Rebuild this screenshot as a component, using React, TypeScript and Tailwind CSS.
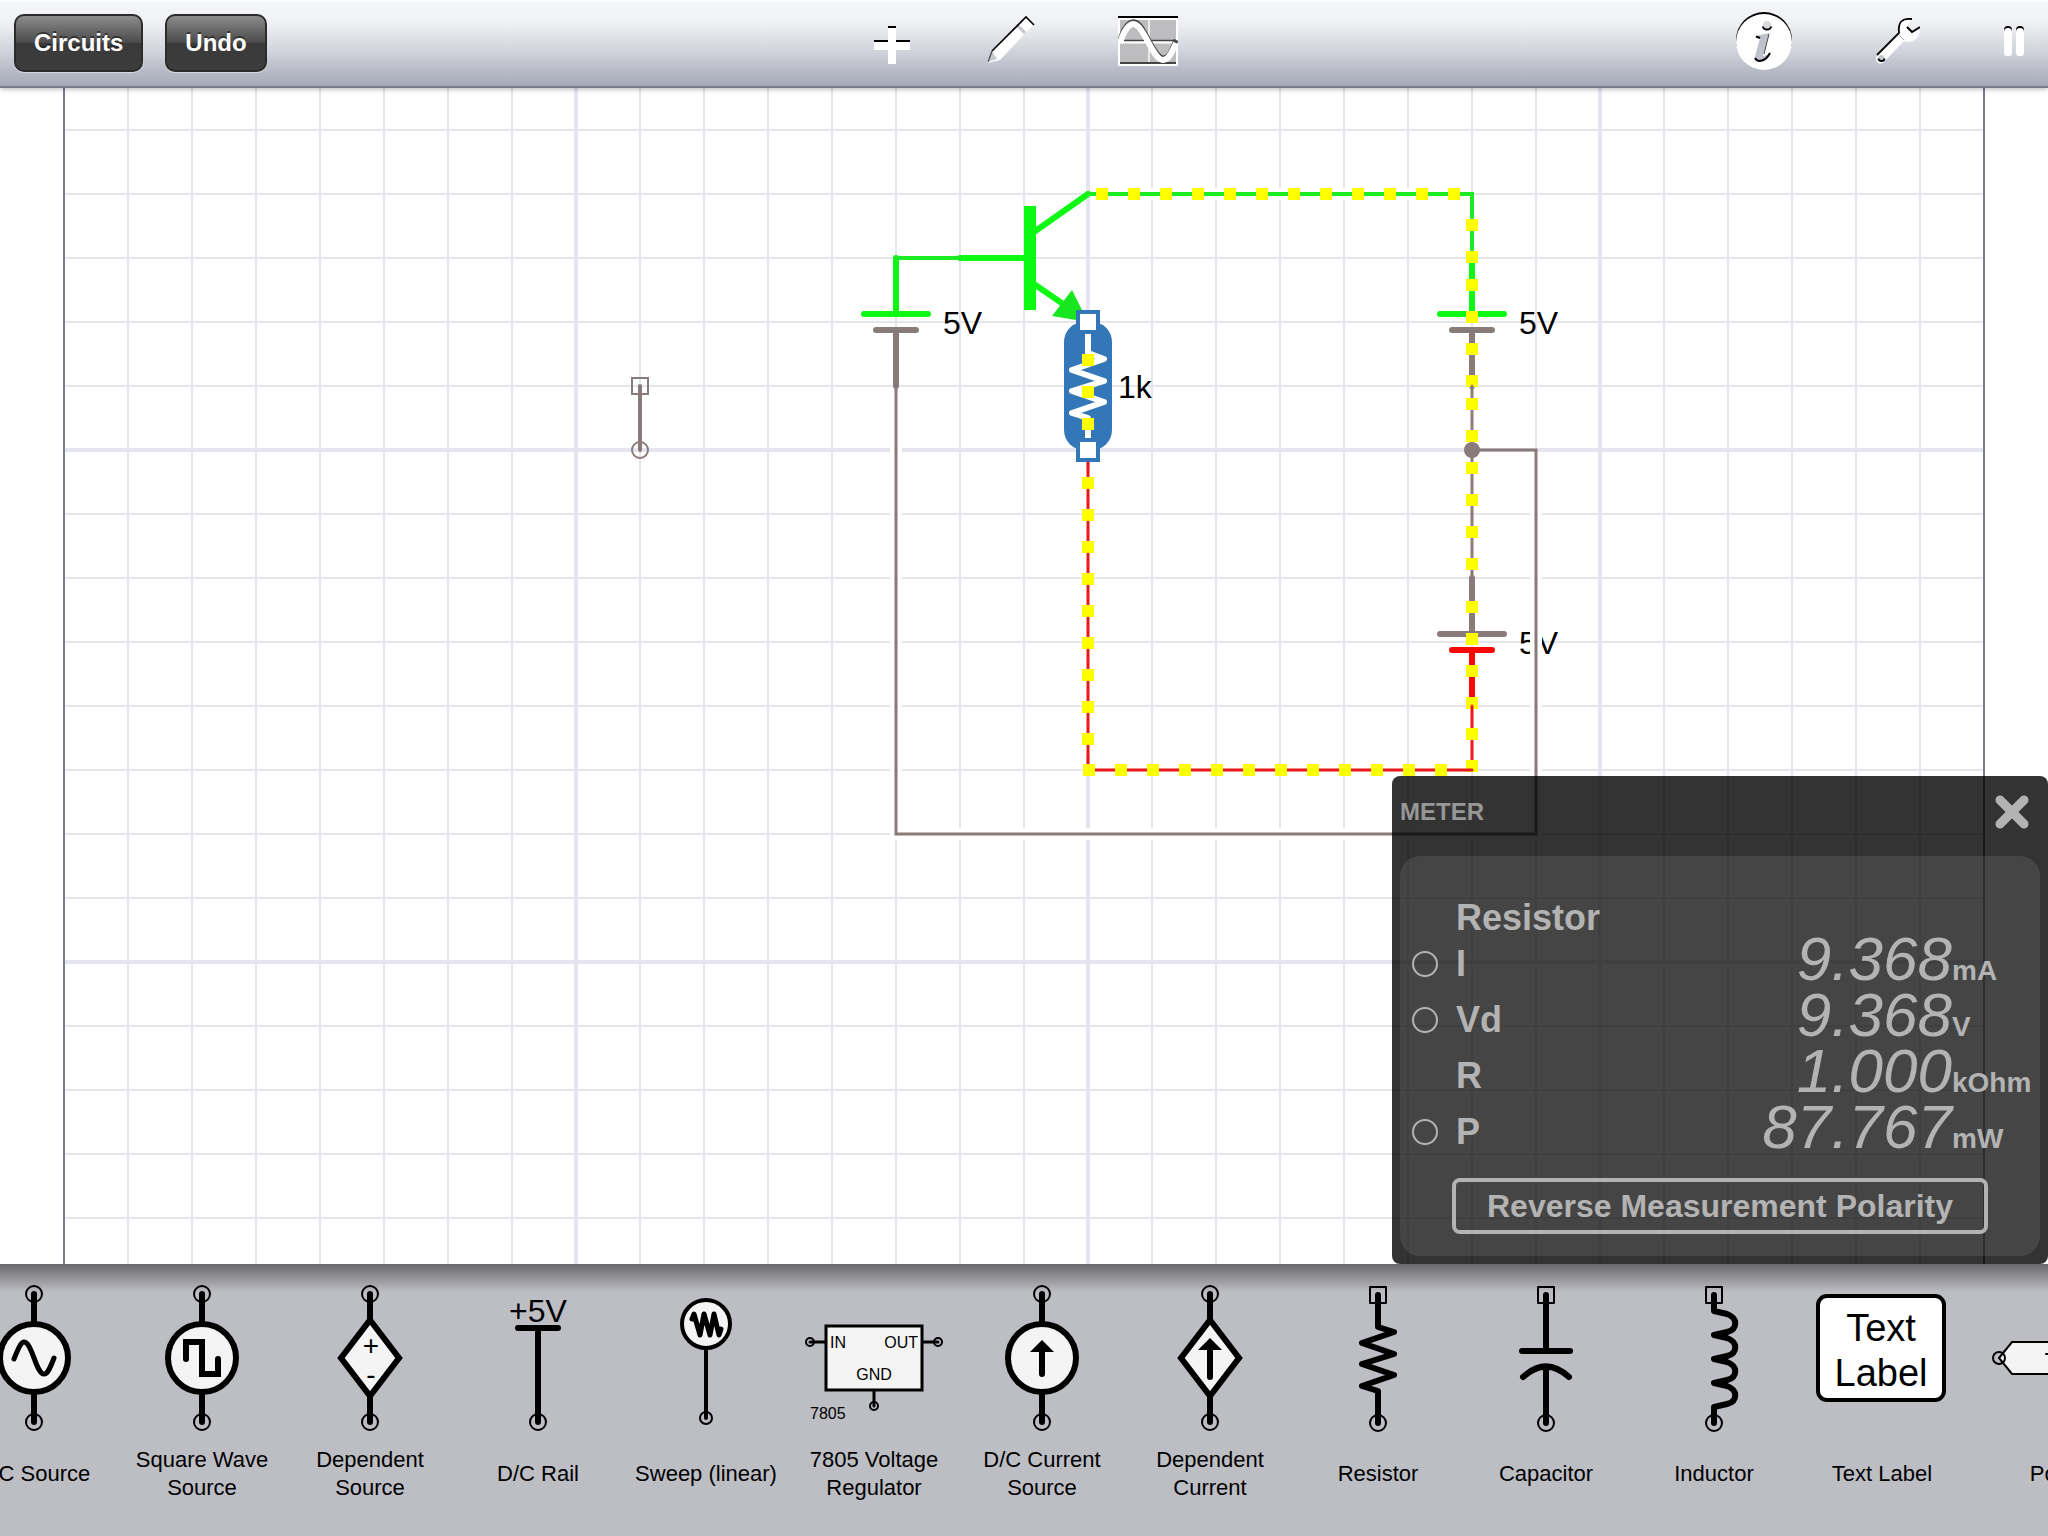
import type { ReactNode } from "react";

const GREY = "#897b79";
const GREEN = "#0bf913";
const RED = "#fb0505";
const YELLOW = "#ffff00";
const BLUE = "#3477b8";

const range = (start: number, step: number, count: number) => Array.from({ length: count }, (_, i) => start + i * step);

const minorX = range(128, 64, 29).filter((x) => (x - 64) % 512 !== 0);
const majorX = [576, 1088, 1600];
const minorY = range(130, 64, 18).filter((y) => y !== 450 && y !== 962);
const majorY = [450, 962];

/* ---------- toolbar ---------- */

function BarButton({ children }: { children: ReactNode }) {
  return (
    <button
      type="button"
      className="h-[58px] rounded-[10px] border-2 border-[#2b2b2b] bg-[linear-gradient(#8c8c8c,#4a4a4a_50%,#3a3a3a_50%,#3c3c3c)] px-[18px] text-2xl font-bold text-white shadow-[0_1px_1px_rgba(255,255,255,0.5)] [text-shadow:0_-2px_0_rgba(0,0,0,0.45)]"
    >
      {children}
    </button>
  );
}

function IconButton({ label, children }: { label: string; children: ReactNode }) {
  return (
    <button type="button" aria-label={label} className="shrink-0">
      {children}
    </button>
  );
}

function PlusIcon() {
  return (
    <svg className="block" width="40" height="62" viewBox="870 12 40 62">
      <path d="M888 26h8v14h14v10h-14v14h-8V50h-14V40h14z" fill="#fff" />
      <path d="M888 26h8v2h-8zM874 40h14v2h-14zM896 40h14v2h-14z" fill="#000" />
    </svg>
  );
}

function PencilIcon() {
  return (
    <svg className="block" width="52" height="62" viewBox="988 12 52 62">
      <path d="M992 50L1026 16L1034 24L1000 60L988 63Z" fill="#fff" />
      <path d="M992 51L988 62L997 59Z" fill="#c9cad0" />
      <path d="M1017 25L1025 33" stroke="#c4c5ca" strokeWidth="3" />
      <path d="M992 51L1026 17L1034 25" stroke="#000" strokeWidth="1.6" fill="none" />
      <path d="M992 51L988 62" stroke="#555" strokeWidth="1.4" />
    </svg>
  );
}

function ScopeIcon() {
  return (
    <svg className="block" width="60" height="62" viewBox="1118 12 60 62">
      <rect x="1118" y="16" width="60" height="50" fill="#fff" />
      <rect x="1120" y="20" width="56" height="44" fill="#bdbdbf" />
      <rect x="1118" y="16" width="60" height="2" fill="#000" />
      <path d="M1149 20v43" stroke="#ececec" strokeWidth="2" />
      <path d="M1120 40.5h56" stroke="#444" strokeWidth="1.4" />
      <path d="M1120 42.5h56" stroke="#fff" strokeWidth="2" />
      <path d="M1120 63h56" stroke="#444" strokeWidth="2" />
      <path d="M1120 40C1125 24 1133 16 1141 27C1149 38 1155 57 1163 58C1169 58 1172 50 1176 40" stroke="#444" strokeWidth="5" fill="none" />
      <path d="M1120 43C1125 27 1133 17 1141 30C1149 41 1155 60 1163 60C1169 60 1172 52 1176 43" stroke="#fff" strokeWidth="6" fill="none" />
    </svg>
  );
}

function InfoIcon() {
  return (
    <svg className="block" width="56" height="62" viewBox="1736 12 56 62">
      <circle cx="1764" cy="40" r="28" fill="#000" />
      <path d="M1736 42a28 28 0 0 1 56 0a28 28 0 0 1-56 0z" fill="#fff" />
      <circle cx="1767" cy="25" r="4" fill="#d8d9de" />
      <path d="M1763 26.5a4 3 0 0 0 8 0" stroke="#000" strokeWidth="2" fill="none" />
      <path d="M1756 36L1769 33L1763 56Q1766 56 1770 53Q1765 61 1759 61Q1753 60 1756 53L1760 38Z" fill="#bfc1cb" />
      <path d="M1756 36.5L1760 38" stroke="#000" strokeWidth="2" />
      <path d="M1769 34L1764 54" stroke="#444" strokeWidth="1" />
      <path d="M1755 58Q1757 62 1762 60.5Q1767 59 1770 53" stroke="#000" strokeWidth="2" fill="none" />
    </svg>
  );
}

function WrenchIcon() {
  return (
    <svg className="block" width="44" height="62" viewBox="1876 12 44 62">
      <path d="M1898 34Q1896 20 1911 18L1907 27L1913 32L1920 27Q1920 42 1906 42L1904 41L1884 62Q1880 65 1877 62Q1875 59 1877 55Z" fill="#fff" />
      <path d="M1912 19Q1897 17 1899 33L1877 55" stroke="#000" strokeWidth="1.8" fill="none" />
      <path d="M1907 27L1912 32L1920 27" stroke="#000" strokeWidth="2" fill="none" />
      <path d="M1899 35L1904 40" stroke="#aaa" strokeWidth="1" />
      <circle cx="1881.500" cy="58" r="3" fill="#c4c5ca" />
      <path d="M1878.500 58.500a3 2.500 0 0 0 6 0" stroke="#000" strokeWidth="1.8" fill="none" />
    </svg>
  );
}

function PauseIcon() {
  return (
    <svg className="block" width="20" height="62" viewBox="2004 12 20 62">
      <rect x="2004" y="26" width="8" height="29" rx="4" fill="#000" />
      <rect x="2016" y="26" width="8" height="29" rx="4" fill="#000" />
      <path d="M2004 32a4 4 0 0 1 8 0v21a3 3 0 0 1-3 3h-2a3 3 0 0 1-3-3zM2016 32a4 4 0 0 1 8 0v21a3 3 0 0 1-3 3h-2a3 3 0 0 1-3-3z" fill="#fff" />
    </svg>
  );
}

function Toolbar() {
  return (
    <header className="relative z-10 grid h-[88px] shrink-0 grid-cols-[1fr_auto_1fr] items-center border-b-2 border-[#777d8f] bg-[linear-gradient(#ffffff,#f4f5f7_3%,#f1f2f5_25%,#d0d3db_60%,#a5a8b7)] px-[14px] shadow-[0_1px_5px_rgba(0,0,0,0.3)]">
      <div className="flex gap-[22px]">
        <BarButton>Circuits</BarButton>
        <BarButton>Undo</BarButton>
      </div>
      <div className="flex gap-[78px]">
        <IconButton label="Add"><PlusIcon /></IconButton>
        <IconButton label="Edit"><PencilIcon /></IconButton>
        <IconButton label="Scope"><ScopeIcon /></IconButton>
      </div>
      <div className="flex justify-end gap-[84px] pr-[10px]">
        <IconButton label="Info"><InfoIcon /></IconButton>
        <IconButton label="Settings"><WrenchIcon /></IconButton>
        <IconButton label="Pause"><PauseIcon /></IconButton>
      </div>
    </header>
  );
}

/* ---------- circuit ---------- */

function Dots({ xs, ys }: { xs: number[]; ys: number[] }) {
  return (
    <g fill={YELLOW}>
      {xs.flatMap((x) => ys.map((y) => <rect key={`${x}-${y}`} x={x - 6} y={y - 6} width="12" height="12" />))}
    </g>
  );
}

function Battery({ x, y, top, bottom }: { x: number; y: number; top: string; bottom: string }) {
  return (
    <g strokeWidth="6" strokeLinecap="round" fill="none">
      <path d={`M${x} ${y - 64}V${y - 8}M${x - 32} ${y - 8}H${x + 32}`} stroke={top} />
      <path d={`M${x} ${y + 64}V${y + 8}M${x - 20} ${y + 8}H${x + 20}`} stroke={bottom} />
    </g>
  );
}

function CircuitCanvas() {
  return (
    <svg
      className="block h-full w-full"
      viewBox="0 88 2048 1176"
      preserveAspectRatio="xMidYMid slice"
      role="img"
      aria-label="Circuit"
      fontFamily='"Liberation Sans", Arial, sans-serif'
    >
      <g stroke="#e5e6eb" strokeWidth="2">
        {minorX.map((x) => <path key={x} d={`M${x} 88V1264`} />)}
        {minorY.map((y) => <path key={y} d={`M64 ${y}H1984`} />)}
      </g>
      <g stroke="#e4e5ee" strokeWidth="4">
        {majorX.map((x) => <path key={x} d={`M${x} 88V1264`} />)}
        {majorY.map((y) => <path key={y} d={`M64 ${y}H1984`} />)}
      </g>
      <path d="M64 88V1264M1984 88V1264" stroke="#7b7e92" strokeWidth="2" />

      <g fontSize="32" fill="#000">
        <text x="943" y="334">5V</text>
        <text x="1519" y="334">5V</text>
        <text x="1519" y="654">5V</text>
        <text x="1118" y="398">1k</text>
      </g>

      {/* loose ground probe */}
      <g stroke={GREY} strokeWidth="2" fill="none">
        <rect x="632" y="378" width="16" height="16" />
        <circle cx="640" cy="450" r="8" />
        <path d="M640 386V450" strokeWidth="4" strokeLinecap="round" />
      </g>

      <Battery x={896} y={322} top={GREEN} bottom={GREY} />
      <Battery x={1472} y={322} top={GREEN} bottom={GREY} />
      <Battery x={1472} y={642} top={GREY} bottom={RED} />
      <Dots xs={[1472]} ys={[285, 317, 349, 381, 607, 639, 671, 703]} />

      {/* transistor */}
      <g stroke={GREEN} strokeWidth="6" fill="none" strokeLinecap="round">
        <path d="M960 258H1026M1034 232L1088 194M1034 284L1066 306" />
      </g>
      <rect x="1024" y="206" width="12" height="104" fill={GREEN} />
      <path d="M1072 290L1052 316L1088 322Z" fill="#18e71f" />

      {/* wires, with a white gap where they cross others */}
      <g stroke="#fff" strokeWidth="12" fill="none">
        <path d="M1100 194H1460M896 444V834H1536V456M1088 756V470M1100 770H1460" />
      </g>
      <g fill="none" strokeWidth="3" strokeLinecap="round">
        <path d="M896 258H960M1088 194H1472V258" stroke="#1bea24" strokeWidth="4" />
        <path d="M896 386V834H1536V450H1472M1472 386V578" stroke={GREY} />
        <path d="M1088 450V770M1472 706V770" stroke="#e8191c" />
      </g>
      <Dots xs={[1472]} ys={[225, 257, 404, 436, 468, 500, 532, 564, 734, 766]} />
      <Dots xs={range(1102, 32, 12)} ys={[194]} />
      <Dots xs={[1088]} ys={range(483, 32, 9)} />
      <path d="M1088 770H1472" stroke="#e8191c" strokeWidth="3" strokeLinecap="round" />
      <Dots xs={range(1089, 32, 12)} ys={[770]} />
      <circle cx="1472" cy="450" r="8" fill={GREY} />

      {/* selected resistor */}
      <rect x="1064" y="322" width="48" height="128" rx="20" fill={BLUE} />
      <path
        d="M1088 332V353L1104 359L1072 370L1104 381L1072 391L1104 402L1072 413L1088 418V438"
        stroke="#fff"
        strokeWidth="6"
        strokeLinejoin="round"
        fill="none"
      />
      <Dots xs={[1088]} ys={[360, 392, 424]} />
      <g fill="#fff" stroke={BLUE} strokeWidth="4">
        <rect x="1078" y="312" width="20" height="20" />
        <rect x="1078" y="440" width="20" height="20" />
      </g>
    </svg>
  );
}

/* ---------- meter ---------- */

const readings = [
  { name: "I", value: "9.368", unit: "mA", selectable: true },
  { name: "Vd", value: "9.368", unit: "V", selectable: true },
  { name: "R", value: "1.000", unit: "kOhm", selectable: false },
  { name: "P", value: "87.767", unit: "mW", selectable: true },
];

function MeterPanel() {
  return (
    <section className="absolute right-0 bottom-0 w-[656px] rounded-lg bg-black/80 p-2 pt-0 font-bold text-[#b3b3b3]">
      <div className="mb-2 flex h-[72px] items-center justify-between pr-[10px]">
        <h2 className="text-2xl text-[#979797]">METER</h2>
        <button type="button" aria-label="Close">
          <svg className="block" width="36" height="44" viewBox="0 0 36 44">
            <path d="M6 10L30 34M30 10L6 34" stroke="#b3b3b3" strokeWidth="9" strokeLinecap="round" />
          </svg>
        </button>
      </div>
      <div className="rounded-[20px] bg-white/9 pt-11 pr-1 pb-[22px] pl-3">
        <h3 className="pl-11 text-4xl leading-9">Resistor</h3>
        {readings.map((r) => (
          <div key={r.name} className="flex h-14">
            <label className="flex flex-1 items-center text-4xl leading-10">
              <span className="flex w-11 shrink-0">
                {r.selectable && (
                  <input type="radio" name="trace" className="size-[26px] appearance-none rounded-full border-2 border-[#b3b3b3] checked:bg-[#b3b3b3]" />
                )}
              </span>
              {r.name}
            </label>
            <div className="flex items-baseline">
              <span className="text-[62px] leading-[46px] font-normal italic">{r.value}</span>
              <span className="w-[84px] text-[28px] leading-8">{r.unit}</span>
            </div>
          </div>
        ))}
        <button
          type="button"
          className="mt-[18px] ml-10 h-14 w-[536px] rounded-lg border-4 border-[#b3b3b3] text-[32px] leading-10"
        >
          Reverse Measurement Polarity
        </button>
      </div>
    </section>
  );
}

/* ---------- palette ---------- */

function RoundPin({ y }: { y: number }) {
  return <circle cx="84" cy={y} r="8" strokeWidth="2" fill="none" />;
}

function SquarePin() {
  return <rect x="76" y="15" width="16" height="16" strokeWidth="2" fill="none" />;
}

function RoundSource({ children }: { children: ReactNode }) {
  return (
    <>
      <RoundPin y={22} />
      <RoundPin y={150} />
      <path d="M84 22V150" />
      <circle cx="84" cy="86" r="34" fill="#f4f4f5" />
      {children}
    </>
  );
}

function DiamondSource({ children }: { children: ReactNode }) {
  return (
    <>
      <RoundPin y={22} />
      <RoundPin y={150} />
      <path d="M84 22V150" />
      <path d="M84 48L113 86L84 124L55 86Z" fill="#f4f4f5" strokeLinejoin="miter" />
      {children}
    </>
  );
}

const parts: { id: string; label: string; drawing: ReactNode }[] = [
  {
    id: "ac",
    label: "A/C Source",
    drawing: (
      <RoundSource>
        <path d="M64 87C70 72 72 70 74 70C82 70 86 102 94 102C97 102 99 99 104 86" fill="none" strokeWidth="5" />
      </RoundSource>
    ),
  },
  {
    id: "square",
    label: "Square Wave Source",
    drawing: (
      <RoundSource>
        <path d="M68 87V70H84V102H100V87" fill="none" strokeWidth="6" strokeLinejoin="miter" />
      </RoundSource>
    ),
  },
  {
    id: "dep-source",
    label: "Dependent Source",
    drawing: (
      <DiamondSource>
        <g fill="#000" stroke="none" fontSize="28" textAnchor="middle">
          <text x="85" y="83">+</text>
          <text x="85" y="112">-</text>
        </g>
      </DiamondSource>
    ),
  },
  {
    id: "rail",
    label: "D/C Rail",
    drawing: (
      <>
        <text x="84" y="50" fontSize="32" textAnchor="middle" fill="#000" stroke="none">+5V</text>
        <path d="M64 56H104M84 56V150" />
        <RoundPin y={150} />
      </>
    ),
  },
  {
    id: "sweep",
    label: "Sweep (linear)",
    drawing: (
      <>
        <path d="M84 76V146" strokeWidth="4" />
        <circle cx="84" cy="52" r="24" fill="#f4f4f5" strokeWidth="4" />
        <path d="M70 47L72 42L78 63L82 42L88 63L92 42L97 63L99 57" fill="none" strokeWidth="5" />
        <circle cx="84" cy="146" r="6" strokeWidth="2" fill="none" />
      </>
    ),
  },
  {
    id: "7805",
    label: "7805 Voltage Regulator",
    drawing: (
      <>
        <path d="M20 70H36M132 70H148M84 118V134" strokeWidth="3" />
        <rect x="36" y="54" width="96" height="64" fill="#f4f4f5" strokeWidth="3" strokeLinejoin="miter" />
        <g fill="none" strokeWidth="2">
          <circle cx="20" cy="70" r="4" />
          <circle cx="148" cy="70" r="4" />
          <circle cx="84" cy="134" r="4" />
        </g>
        <g fill="#000" stroke="none" fontSize="16">
          <text x="40" y="76">IN</text>
          <text x="128" y="76" textAnchor="end">OUT</text>
          <text x="84" y="108" textAnchor="middle">GND</text>
          <text x="20" y="147">7805</text>
        </g>
      </>
    ),
  },
  {
    id: "dc-current",
    label: "D/C Current Source",
    drawing: (
      <RoundSource>
        <path d="M84 78V102" />
        <path d="M84 68L96 80H72Z" fill="#000" stroke="none" />
      </RoundSource>
    ),
  },
  {
    id: "dep-current",
    label: "Dependent Current",
    drawing: (
      <DiamondSource>
        <path d="M84 76V105" />
        <path d="M84 66L96 78H72Z" fill="#000" stroke="none" />
      </DiamondSource>
    ),
  },
  {
    id: "resistor",
    label: "Resistor",
    drawing: (
      <>
        <SquarePin />
        <path d="M84 23V55L100 60L68 71L100 82L68 92L100 103L68 114L84 119V151" fill="none" />
        <RoundPin y={151} />
      </>
    ),
  },
  {
    id: "capacitor",
    label: "Capacitor",
    drawing: (
      <>
        <SquarePin />
        <path d="M84 23V79M60 79H108M61 105Q84 84 107 105M84 96V151" fill="none" />
        <RoundPin y={151} />
      </>
    ),
  },
  {
    id: "inductor",
    label: "Inductor",
    drawing: (
      <>
        <SquarePin />
        <path
          d="M84 23V39L97 42C108 46 108 57 97 60L84 63L97 66C108 70 108 81 97 84L84 87L97 90C108 94 108 105 97 108L84 111L97 114C108 118 108 129 97 132L84 135V151"
          fill="none"
        />
        <RoundPin y={151} />
      </>
    ),
  },
  {
    id: "text",
    label: "Text Label",
    drawing: (
      <>
        <rect x="20" y="24" width="126" height="104" rx="9" fill="#fff" strokeWidth="4" />
        <g fill="#000" stroke="none" fontSize="38" textAnchor="middle">
          <text x="83" y="69">Text</text>
          <text x="83" y="114">Label</text>
        </g>
      </>
    ),
  },
  {
    id: "port",
    label: "Port",
    drawing: (
      <>
        <path d="M33 86L46 70H135V102H46Z" fill="#f4f4f5" strokeWidth="2" strokeLinejoin="miter" />
        <circle cx="33" cy="86" r="6" strokeWidth="2" fill="none" />
        <path d="M80 82h6" strokeWidth="2" />
      </>
    ),
  },
];

function Palette() {
  return (
    <nav
      aria-label="Components"
      className="flex shrink-0 overflow-hidden bg-[#bdbec4] bg-[linear-gradient(#69696c,#bdbec4_28px)] pt-2 pb-6"
    >
      <ul className="-ml-[50px] flex">
        {parts.map((part) => (
          <li key={part.id} className="w-[168px] shrink-0">
            <button type="button" className="flex w-full flex-col items-center text-black">
              <svg
                className="block"
                width="168"
                height="164"
                viewBox="0 0 168 164"
                stroke="#000"
                strokeWidth="6"
                strokeLinecap="round"
                strokeLinejoin="round"
                aria-hidden
              >
                {part.drawing}
              </svg>
              <span className="flex h-[76px] items-center px-2 text-[22px] leading-7">{part.label}</span>
            </button>
          </li>
        ))}
      </ul>
    </nav>
  );
}

export default function App() {
  return (
    <div className="flex h-screen flex-col overflow-hidden bg-white font-['Liberation_Sans',Arial,sans-serif]">
      <Toolbar />
      <main className="relative min-h-0 flex-1">
        <CircuitCanvas />
        <MeterPanel />
      </main>
      <Palette />
    </div>
  );
}
